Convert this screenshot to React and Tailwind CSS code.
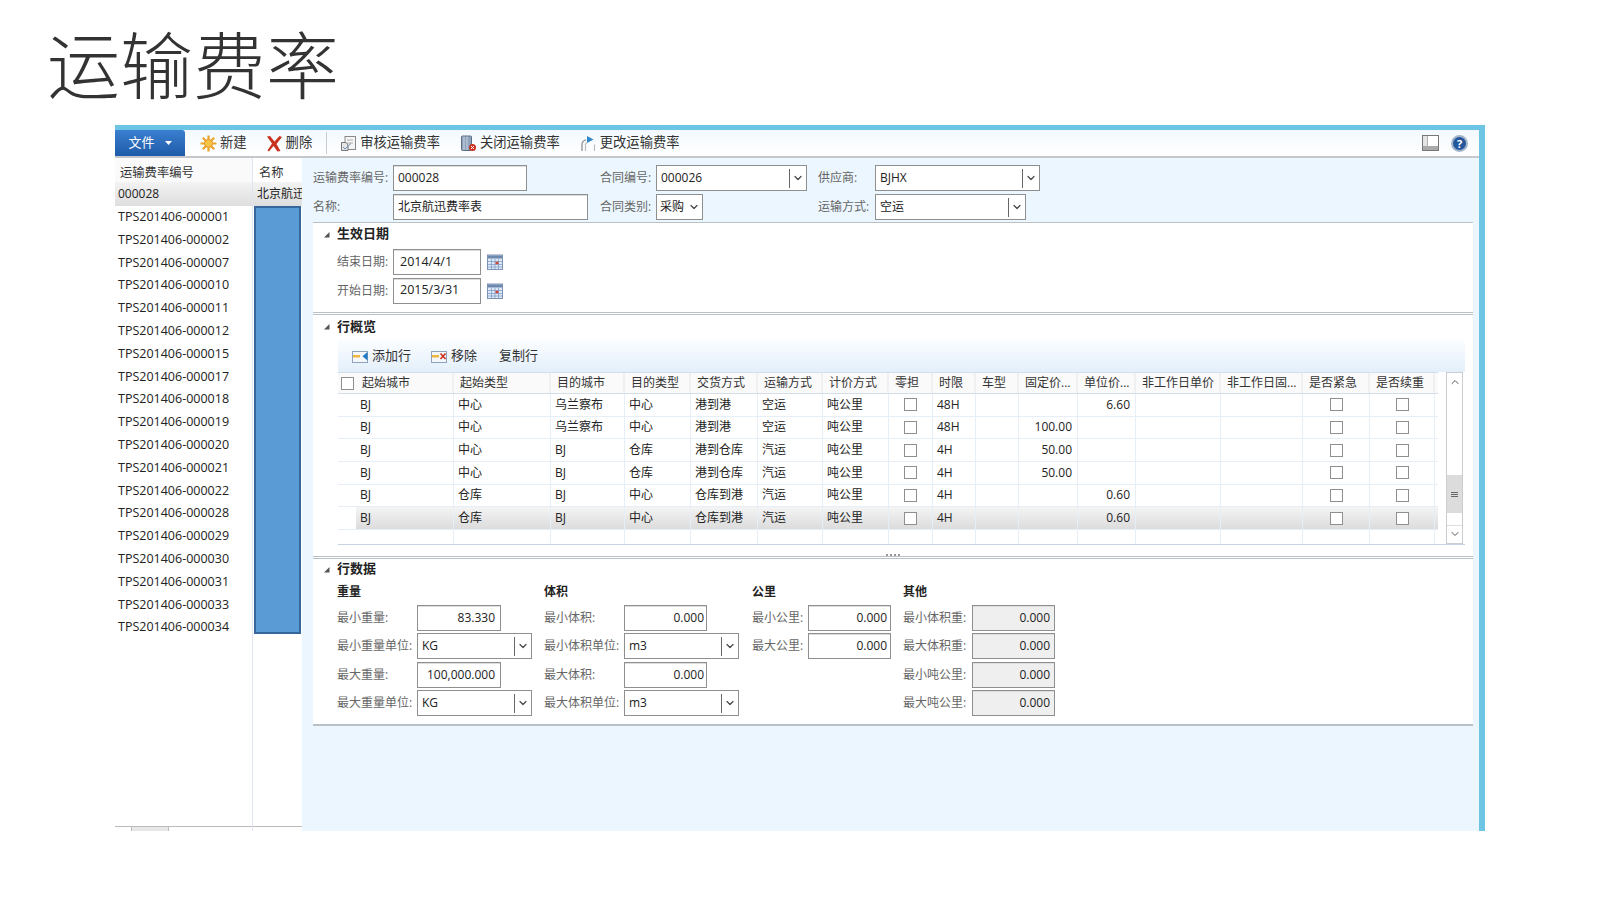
import { ChevronDown, ChevronUp } from "lucide-react";

const TEXT_FONT = "font-['Open_Sans','Noto_Sans_CJK_SC',sans-serif]";

const leftRows = ["000001", "000002", "000007", "000010", "000011", "000012", "000015", "000017", "000018", "000019", "000020", "000021", "000022", "000028", "000029", "000030", "000031", "000033", "000034"];

const columns = [
  { name: "起始城市", w: "w-[98px]" },
  { name: "起始类型", w: "w-[97px]" },
  { name: "目的城市", w: "w-[74px]" },
  { name: "目的类型", w: "w-[66px]" },
  { name: "交货方式", w: "w-[67px]" },
  { name: "运输方式", w: "w-[65px]" },
  { name: "计价方式", w: "w-[66px]" },
  { name: "零担", w: "w-[44px]" },
  { name: "时限", w: "w-[43px]" },
  { name: "车型", w: "w-[43px]" },
  { name: "固定价...", w: "w-[59px]" },
  { name: "单位价...", w: "w-[58px]" },
  { name: "非工作日单价", w: "w-[85px]" },
  { name: "非工作日固...", w: "w-[82px]" },
  { name: "是否紧急", w: "w-[67px]" },
  { name: "是否续重", w: "w-[65px]" },
];

const rows = [
  ["BJ", "中心", "乌兰察布", "中心", "港到港", "空运", "吨公里", "48H", "", "6.60"],
  ["BJ", "中心", "乌兰察布", "中心", "港到港", "空运", "吨公里", "48H", "100.00", ""],
  ["BJ", "中心", "BJ", "仓库", "港到仓库", "汽运", "吨公里", "4H", "50.00", ""],
  ["BJ", "中心", "BJ", "仓库", "港到仓库", "汽运", "吨公里", "4H", "50.00", ""],
  ["BJ", "仓库", "BJ", "中心", "仓库到港", "汽运", "吨公里", "4H", "", "0.60"],
  ["BJ", "仓库", "BJ", "中心", "仓库到港", "汽运", "吨公里", "4H", "", "0.60"],
];

const Triangle = () => (
  <svg width="7" height="7" viewBox="0 0 7 7" className="shrink-0">
    <path d="M6.5 1 L6.5 6.5 L1 6.5 Z" fill="#555" />
  </svg>
);

const SunIcon = () => (
  <svg width="17" height="17" viewBox="0 0 17 17">
    <g stroke="#eaa526" strokeWidth="2.2">
      <path d="M8.5 0.5 V16.5 M0.5 8.5 H16.5 M2.8 2.8 L14.2 14.2 M14.2 2.8 L2.8 14.2" />
    </g>
    <circle cx="8.5" cy="8.5" r="4" fill="#f6c343" stroke="#e8952a" />
  </svg>
);

const DeleteIcon = () => (
  <svg width="17" height="17" viewBox="0 0 17 17">
    <path d="M1 1.5 L4 1 L8.5 6.5 L13.5 1 L16 2 L10.5 9 L14.5 16 L11.5 16.5 L7.5 11 L3 16.5 L1.5 15.5 L6 8.5 Z" fill="#c8321e" />
  </svg>
);

const ReviewIcon = () => (
  <svg width="17" height="17" viewBox="0 0 17 17" fill="none">
    <rect x="5" y="1.5" width="10.5" height="13" fill="#f5f5f5" stroke="#8a8a8a" />
    <path d="M7 5 H13 M7 8 H13" stroke="#b0b0b0" />
    <path d="M1.5 7.5 H6 L8 10 V15.5 H1.5 Z" fill="#e6e6e6" stroke="#777" />
    <path d="M3 12 L5 14 L11 8.5" stroke="#6b8fb5" />
  </svg>
);

const CloseDocIcon = () => (
  <svg width="17" height="17" viewBox="0 0 17 17">
    <rect x="1.5" y="1" width="10" height="14.5" rx="1" fill="#8fa3bb" stroke="#5c6f86" />
    <path d="M4 1.5 V15 M7 1.5 V15" stroke="#c8d3df" />
    <circle cx="12.5" cy="12.5" r="3.5" fill="#c8321e" />
    <path d="M11 11 L14 14 M14 11 L11 14" stroke="#fff" />
  </svg>
);

const ChangeIcon = () => (
  <svg width="17" height="17" viewBox="0 0 17 17" fill="none">
    <path d="M2 16 V9.5 C2 7 3.5 5.5 6 4.8" stroke="#9a9a9a" strokeWidth="1.4" />
    <path d="M5.5 16 V9.5 C5.5 8.5 6.2 8 7 7.8 M14.5 16 V9.5" stroke="#bcbcbc" strokeWidth="1.2" />
    <path d="M7 1 L13.5 4.5 L7 8 Z" fill="#2f86c8" />
  </svg>
);

const AddRowIcon = () => (
  <svg width="17" height="15" viewBox="0 0 17 15">
    <rect x="0.5" y="2.5" width="15" height="11" fill="#f3f6fa" stroke="#8fa3bb" />
    <rect x="1" y="6" width="7" height="2.5" fill="#f0b840" />
    <path d="M15.5 3 L10.5 7.2 L15.5 11.5 Z" fill="#1f78c8" />
  </svg>
);

const RemoveRowIcon = () => (
  <svg width="17" height="15" viewBox="0 0 17 15">
    <rect x="0.5" y="2.5" width="15" height="11" fill="#f3f6fa" stroke="#8fa3bb" />
    <rect x="1" y="6" width="7" height="2.5" fill="#f0b840" />
    <path d="M9.5 4.5 L14.5 10 M14.5 4.5 L9.5 10" stroke="#c8321e" strokeWidth="1.6" />
  </svg>
);

const BookIcon = () => (
  <svg width="17" height="16" viewBox="0 0 17 16" fill="none">
    <rect x="0.5" y="0.5" width="16" height="15" fill="#fff" stroke="#777" />
    <rect x="1" y="11" width="15" height="4" fill="#aaa" />
    <path d="M5 1 V11" stroke="#666" />
    <path d="M1 1 H5 V11 H1 Z" fill="#e4e4e4" />
  </svg>
);

const HelpIcon = () => (
  <div className="flex h-[17px] w-[17px] items-center justify-center rounded-full border-2 border-[#a3b4cb] bg-[#24569c] text-[11px] font-bold leading-none text-white">
    ?
  </div>
);

const CalendarIcon = () => (
  <svg width="16" height="16" viewBox="0 0 16 16">
    <rect x="0.5" y="1" width="15" height="14.5" fill="#dfe8f5" stroke="#7d93b5" />
    <rect x="1" y="1.5" width="14" height="3" fill="#6d88b0" />
    <path d="M1 7.5 H15 M1 10.5 H15 M1 13 H15 M4.5 5 V15 M8 5 V15 M11.5 5 V15" stroke="#7f9fca" strokeWidth="0.8" />
    <rect x="8.5" y="7.8" width="3" height="2.4" fill="#d0453a" />
  </svg>
);

const ToolItem = ({ icon, label, className }) => (
  <div className={`flex items-center gap-[3px] ${className}`}>
    {icon}
    <span>{label}</span>
  </div>
);

const Input = ({ value, w, right, disabled, pr = "pr-[4px]", pl = "pl-[4px]", size = "" }) => (
  <div
    className={`flex h-[26px] ${w} shrink-0 items-center border border-[#8e8f8f] ${pl} ${pr} ${size} text-[#222] shadow-[inset_0_1px_0_#ddd] ${right ? "justify-end" : ""} ${disabled ? "bg-[#efefef]" : "bg-white"}`}
  >
    {value}
  </div>
);

const Combo = ({ value, w }) => (
  <div className={`flex h-[26px] ${w} shrink-0 items-center border border-[#8e8f8f] bg-white text-[#222]`}>
    <span className="flex-1 truncate px-[4px]">{value}</span>
    <span className="flex h-[19px] w-[17px] shrink-0 items-center justify-center border-l border-[#666]">
      <ChevronDown size={12} strokeWidth={2.4} color="#444" />
    </span>
  </div>
);

// native select look, no divider before the arrow
const Select = ({ value, w }) => (
  <div className={`flex h-[26px] ${w} shrink-0 items-center justify-between border border-[#8e8f8f] bg-white pl-[3px] pr-[2px] text-[#222]`}>
    <span className="whitespace-nowrap">{value}</span>
    <ChevronDown size={12} strokeWidth={2.4} color="#444" />
  </div>
);

const CheckBox = () => (
  <span className="block h-[13px] w-[13px] border border-[#8f8f8f] bg-white" />
);

const SectionHead = ({ title, className }) => (
  <div className={`flex items-center gap-[7px] pl-[10px] font-bold text-[#222] ${className}`}>
    <Triangle />
    <span className="text-[13px]">{title}</span>
  </div>
);

const Field = ({ label, w, children }) => (
  <div className="flex items-center">
    <span className={`${w} shrink-0 text-[#666]`}>{label}</span>
    {children}
  </div>
);

const GroupHead = ({ title }) => (
  <div className="flex h-[23px] items-center pt-[2px] font-bold text-[#222]">{title}</div>
);

const LeftPane = () => (
  <div className="flex w-[187px] shrink-0 bg-white">
    <div className="flex w-[138px] shrink-0 flex-col border-r border-[#dfe5ec]">
      <div className="flex h-[24px] items-center bg-[#fafafa] pl-[5px] pt-[6px] text-[12.3px] text-[#333]">运输费率编号</div>
      <div className="flex h-[24px] items-center bg-gradient-to-b from-[#f3f3f3] to-[#dedede] pl-[3px] text-[#222]">000028</div>
      {leftRows.map((r) => (
        <div key={r} className="flex h-[22.8px] items-center pl-[3px] text-[12.5px] text-[#222]">
          TPS201406-{r}
        </div>
      ))}
      <div className="mt-auto h-[5px] border-t border-[#bbb] pl-[16px]">
        <div className="h-full w-[38px] border-x border-[#bbb] bg-[#e8e8e8]" />
      </div>
    </div>
    <div className="flex min-w-0 flex-1 flex-col">
      <div className="flex h-[24px] items-center pl-[6px] pt-[6px] text-[12.3px] text-[#333]">名称</div>
      <div className="flex h-[24px] items-center overflow-hidden whitespace-nowrap bg-gradient-to-b from-[#f3f3f3] to-[#dedede] pl-[4px] text-[#222]">北京航迅</div>
      <div className="mx-px h-[428px] border-2 border-[#35679b] bg-[#5b9bd5]" />
      <div className="mt-auto h-[5px] border-t border-[#bbb]" />
    </div>
  </div>
);

const TopForm = () => (
  <div className="flex flex-col gap-[3px] pl-[11px] pt-[7px] pb-[2px]">
    <div className="flex items-center">
      <Field label="运输费率编号:" w="w-[80px]"><Input value="000028" w="w-[134px]" /></Field>
      <div className="w-[73px]" />
      <Field label="合同编号:" w="w-[56px]"><Combo value="000026" w="w-[151px]" /></Field>
      <div className="w-[11px]" />
      <Field label="供应商:" w="w-[57px]"><Combo value="BJHX" w="w-[165px]" /></Field>
    </div>
    <div className="flex items-center">
      <Field label="名称:" w="w-[80px]"><Input value="北京航迅费率表" w="w-[195px]" /></Field>
      <div className="w-[12px]" />
      <Field label="合同类别:" w="w-[56px]"><Select value="采购" w="w-[47px]" /></Field>
      <div className="w-[115px]" />
      <Field label="运输方式:" w="w-[57px]"><Combo value="空运" w="w-[151px]" /></Field>
    </div>
  </div>
);

const DateSection = () => (
  <div className="h-[90px] border-t border-[#b9c0c6] bg-white">
    <SectionHead title="生效日期" className="mb-[2px] h-[22px]" />
    <div className="flex flex-col gap-[2.5px] pl-[24px] pt-[2px]">
      <div className="flex items-center">
        <span className="w-[56px] text-[#666]">结束日期:</span>
        <Input value="2014/4/1" w="w-[88px]" pl="pl-[6px]" size="text-[12.5px]" />
        <span className="ml-[6px]"><CalendarIcon /></span>
      </div>
      <div className="flex items-center">
        <span className="w-[56px] text-[#666]">开始日期:</span>
        <Input value="2015/3/31" w="w-[88px]" pl="pl-[6px]" size="text-[12.5px]" />
        <span className="ml-[6px]"><CalendarIcon /></span>
      </div>
    </div>
  </div>
);

const LinesSection = () => (
  <div className="h-[244px] border-t-[3px] border-double border-[#b9c0c6] bg-white">
    <SectionHead title="行概览" className="mb-[2px] h-[23px]" />
    <div className="mr-[8px] ml-[25px] border-b border-[#c5d3e2]">
      <div className="flex h-[32px] items-center bg-gradient-to-b from-[#fbfdff] to-[#e3effb] pl-[14px] text-[13px] text-[#333]">
        <ToolItem icon={<AddRowIcon />} label="添加行" />
        <ToolItem icon={<RemoveRowIcon />} label="移除" className="ml-[20px]" />
        <span className="ml-[22px]">复制行</span>
      </div>
      <div className="flex">
        <div className="min-w-0 flex-1">
          <div className="flex h-[22px] border-y border-[#d5dee8] bg-[#fafafa] text-[#333]">
            <div className="flex w-[18px] shrink-0 items-center justify-center">
              <CheckBox />
            </div>
            {columns.map((c) => (
              <div key={c.name} className={`flex ${c.w} shrink-0 items-center overflow-hidden whitespace-nowrap border-r-2 border-[#eef0f2] pl-[6px]`}>
                {c.name}
              </div>
            ))}
          </div>
          {rows.map((r, i) => (
            <div key={i} className="flex h-[22.65px] border-b border-[#e6eef7]">
              <div className="w-[18px] shrink-0" />
              <div className={`flex flex-1 ${i === 5 ? "bg-gradient-to-b from-[#f4f4f4] to-[#dcdcdc]" : ""}`}>
                {columns.map((c, j) => {
                  const cellBorder = "border-r border-[#e6eef7]";
                  if (j === 7 || j === 14 || j === 15) {
                    return (
                      <div key={c.name} className={`flex ${c.w} shrink-0 items-center justify-center ${cellBorder}`}>
                        <CheckBox />
                      </div>
                    );
                  }
                  if (j >= 12) {
                    return <div key={c.name} className={`${c.w} shrink-0 ${cellBorder}`} />;
                  }
                  const value = j < 7 ? r[j] : j === 8 ? r[7] : j === 10 ? r[8] : j === 11 ? r[9] : "";
                  const numeric = j === 10 || j === 11;
                  return (
                    <div key={c.name} className={`flex ${c.w} shrink-0 items-center whitespace-nowrap pl-[4px] text-[#222] ${numeric ? "justify-end pr-[5px]" : ""} ${cellBorder}`}>
                      {value}
                    </div>
                  );
                })}
              </div>
            </div>
          ))}
          <div className="flex h-[14px]">
            <div className="w-[18px] shrink-0" />
            {columns.map((c) => (
              <div key={c.name} className={`${c.w} shrink-0 border-r border-[#e6eef7]`} />
            ))}
          </div>
        </div>
        <div className="ml-[8px] mr-[2px] flex w-[17px] shrink-0 flex-col border border-[#c9ced3] bg-white">
          <div className="flex h-[18px] items-center justify-center"><ChevronUp size={12} color="#555" /></div>
          <div className="mt-[84px] flex h-[38px] items-center justify-center bg-[#dcdcdc]">
            <div className="flex flex-col gap-[1px]">
              <span className="block h-px w-[7px] bg-[#666]" />
              <span className="block h-px w-[7px] bg-[#666]" />
              <span className="block h-px w-[7px] bg-[#666]" />
            </div>
          </div>
          <div className="mt-auto flex h-[18px] items-center justify-center border-t border-[#ddd]"><ChevronDown size={12} color="#555" /></div>
        </div>
      </div>
    </div>
    <div className="mt-[9px] flex justify-center gap-[2px]">
      {[0, 1, 2, 3].map((d) => (
        <span key={d} className="block h-[2px] w-[2px] bg-[#999]" />
      ))}
    </div>
  </div>
);

const DataSection = () => (
  <div className="h-[170px] border-t-[3px] border-b-2 border-double border-[#b9c0c6] bg-white">
    <SectionHead title="行数据" className="h-[20px]" />
    <div className="flex pl-[24px]">
      <div className="flex w-[207px] shrink-0 flex-col gap-[2.5px]">
        <GroupHead title="重量" />
        <Field label="最小重量:" w="w-[80px]"><Input value="83.330" w="w-[84px]" right pr="pr-[5px]" /></Field>
        <Field label="最小重量单位:" w="w-[80px]"><Combo value="KG" w="w-[115px]" /></Field>
        <Field label="最大重量:" w="w-[80px]"><Input value="100,000.000" w="w-[84px]" right pr="pr-[5px]" /></Field>
        <Field label="最大重量单位:" w="w-[80px]"><Combo value="KG" w="w-[115px]" /></Field>
      </div>
      <div className="flex w-[208px] shrink-0 flex-col gap-[2.5px]">
        <GroupHead title="体积" />
        <Field label="最小体积:" w="w-[80px]"><Input value="0.000" w="w-[83px]" right pr="pr-[2px]" /></Field>
        <Field label="最小体积单位:" w="w-[80px]"><Combo value="m3" w="w-[115px]" /></Field>
        <Field label="最大体积:" w="w-[80px]"><Input value="0.000" w="w-[83px]" right pr="pr-[2px]" /></Field>
        <Field label="最大体积单位:" w="w-[80px]"><Combo value="m3" w="w-[115px]" /></Field>
      </div>
      <div className="flex w-[151px] shrink-0 flex-col gap-[2.5px]">
        <GroupHead title="公里" />
        <Field label="最小公里:" w="w-[56px]"><Input value="0.000" w="w-[83px]" right pr="pr-[3px]" /></Field>
        <Field label="最大公里:" w="w-[56px]"><Input value="0.000" w="w-[83px]" right pr="pr-[3px]" /></Field>
      </div>
      <div className="flex shrink-0 flex-col gap-[2.5px]">
        <GroupHead title="其他" />
        <Field label="最小体积重:" w="w-[69px]"><Input value="0.000" w="w-[83px]" right disabled /></Field>
        <Field label="最大体积重:" w="w-[69px]"><Input value="0.000" w="w-[83px]" right disabled /></Field>
        <Field label="最小吨公里:" w="w-[69px]"><Input value="0.000" w="w-[83px]" right disabled /></Field>
        <Field label="最大吨公里:" w="w-[69px]"><Input value="0.000" w="w-[83px]" right disabled /></Field>
      </div>
    </div>
  </div>
);

export default function App() {
  return (
    <div className={`h-[900px] w-[1600px] overflow-hidden bg-white text-[12px] ${TEXT_FONT}`}>
      <h1 className="h-[125px] pl-[47px] pt-[15px] text-[73px] font-light leading-[100px] text-[#333]">运输费率</h1>
      <div className="ml-[115px] flex h-[706px] w-[1370px] flex-col border-t-[5px] border-r-[6px] border-[#6cc5e5]">
        <div className="flex h-[28px] shrink-0 items-center border-b-2 border-[#c4c8cc] bg-gradient-to-b from-[#f2f9fe] to-white text-[13.3px] text-[#333]">
          <div className="flex h-full w-[70px] items-center justify-center gap-[10px] rounded-tr-[3px] bg-gradient-to-b from-[#3b7fd0] to-[#1e5ba8] text-[13px] text-white">
            文件
            <svg width="7" height="4" viewBox="0 0 7 4"><path d="M0 0 H7 L3.5 4 Z" fill="#fff" /></svg>
          </div>
          <ToolItem icon={<SunIcon />} label="新建" className="ml-[15px]" />
          <ToolItem icon={<DeleteIcon />} label="删除" className="ml-[19px]" />
          <div className="ml-[14px] h-[22px] w-px bg-[#c5cbd1]" />
          <ToolItem icon={<ReviewIcon />} label="审核运输费率" className="ml-[13px]" />
          <ToolItem icon={<CloseDocIcon />} label="关闭运输费率" className="ml-[20px]" />
          <ToolItem icon={<ChangeIcon />} label="更改运输费率" className="ml-[20px]" />
          <div className="ml-auto flex items-center gap-[12px] pr-[11px]">
            <BookIcon />
            <HelpIcon />
          </div>
        </div>
        <div className="flex min-h-0 flex-1">
          <LeftPane />
          <div className="flex min-w-0 flex-1 flex-col bg-[#ecf6fe]">
            <TopForm />
            <div className="ml-[11px] mr-[6px]">
              <DateSection />
              <LinesSection />
              <DataSection />
            </div>
          </div>
        </div>
      </div>
    </div>
  );
}
